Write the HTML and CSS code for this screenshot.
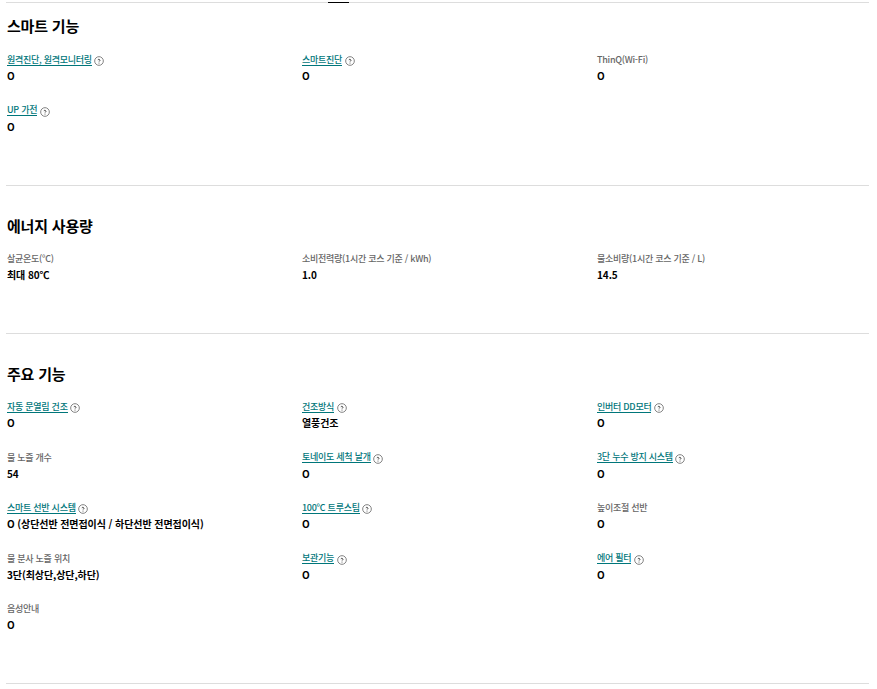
FILE: index.html
```html
<!DOCTYPE html>
<html lang="ko">
<head>
<meta charset="utf-8">
<title>제품 사양</title>
<link rel="stylesheet" href="styles.css">
</head>
<body>
<svg class="sprite" width="0" height="0" aria-hidden="true">
  <symbol id="help" viewBox="0 0 12 12">
    <circle cx="6" cy="6" r="5.2" fill="none" stroke="#777" stroke-width="1.1"/>
    <path d="M4.9 5a1.1 1.1 0 1 1 1.7 1c-.4.3-.6.4-.6.9" fill="none" stroke="#333" stroke-width="1"/>
    <circle cx="6" cy="8.5" r=".6" fill="#333"/>
  </symbol>
</svg>
<main class="page">
  <div class="indicator"></div>
  <section class="spec spec-smart">
    <h2>스마트 기능</h2>
    <dl class="grid">
      <div class="item"><dt><a href="#">원격진단, 원격모니터링</a><svg class="help"><use href="#help"/></svg></dt><dd>O</dd></div>
      <div class="item"><dt><a href="#">스마트진단</a><svg class="help"><use href="#help"/></svg></dt><dd>O</dd></div>
      <div class="item"><dt>ThinQ(Wi-Fi)</dt><dd>O</dd></div>
      <div class="item"><dt><a href="#">UP 가전</a><svg class="help"><use href="#help"/></svg></dt><dd>O</dd></div>
    </dl>
  </section>
  <section class="spec spec-energy">
    <h2>에너지 사용량</h2>
    <dl class="grid">
      <div class="item"><dt>살균온도(℃)</dt><dd>최대 80℃</dd></div>
      <div class="item"><dt>소비전력량(1시간 코스 기준 / kWh)</dt><dd>1.0</dd></div>
      <div class="item"><dt>물소비량(1시간 코스 기준 / L)</dt><dd>14.5</dd></div>
    </dl>
  </section>
  <section class="spec spec-main">
    <h2>주요 기능</h2>
    <dl class="grid">
      <div class="item"><dt><a href="#">자동 문열림 건조</a><svg class="help"><use href="#help"/></svg></dt><dd>O</dd></div>
      <div class="item"><dt><a href="#">건조방식</a><svg class="help"><use href="#help"/></svg></dt><dd>열풍건조</dd></div>
      <div class="item"><dt><a href="#">인버터 DD모터</a><svg class="help"><use href="#help"/></svg></dt><dd>O</dd></div>
      <div class="item"><dt>물 노즐 개수</dt><dd>54</dd></div>
      <div class="item"><dt><a href="#">토네이도 세척 날개</a><svg class="help"><use href="#help"/></svg></dt><dd>O</dd></div>
      <div class="item"><dt><a href="#">3단 누수 방지 시스템</a><svg class="help"><use href="#help"/></svg></dt><dd>O</dd></div>
      <div class="item"><dt><a href="#">스마트 선반 시스템</a><svg class="help"><use href="#help"/></svg></dt><dd>O (상단선반 전면접이식 / 하단선반 전면접이식)</dd></div>
      <div class="item"><dt><a href="#">100℃ 트루스팀</a><svg class="help"><use href="#help"/></svg></dt><dd>O</dd></div>
      <div class="item"><dt>높이조절 선반</dt><dd>O</dd></div>
      <div class="item"><dt>물 분사 노즐 위치</dt><dd>3단(최상단,상단,하단)</dd></div>
      <div class="item"><dt><a href="#">보관기능</a><svg class="help"><use href="#help"/></svg></dt><dd>O</dd></div>
      <div class="item"><dt><a href="#">에어 필터</a><svg class="help"><use href="#help"/></svg></dt><dd>O</dd></div>
      <div class="item"><dt>음성안내</dt><dd>O</dd></div>
    </dl>
  </section>
</main>
</body>
</html>
```
FILE: styles.css
```css
* { box-sizing: border-box; }
html, body { margin: 0; padding: 0; background: #fff; }
body {
  font-family: "Noto Sans CJK KR", "Noto Sans", sans-serif;
  color: #000;
  overflow: hidden;
}
.sprite { position: absolute; }
.page {
  position: relative;
  margin: 2px 8px 0 6px;
  border-top: 1px solid #ddd;
}
.indicator {
  position: absolute;
  top: -1px;
  left: 322px;
  width: 21px;
  height: 1px;
  background: #000;
}
.spec { padding-left: 1px; border-bottom: 1px solid #ddd; }
.spec-smart { height: 183px; padding-top: 12px; }
.spec-energy { height: 148px; padding-top: 29px; }
.spec-main { height: 350px; padding-top: 29px; }
h2 {
  margin: 0;
  font-size: 15px;
  line-height: 22px;
  font-weight: 700;
  letter-spacing: -0.2px;
}
.grid {
  margin: 0;
  padding-top: 14px;
  display: grid;
  grid-template-columns: repeat(3, 295px);
  grid-auto-rows: 50.5px;
}
.spec-smart .grid { padding-top: 15px; }
dt {
  display: flex;
  align-items: center;
  gap: 2.5px;
  height: 16px;
  font-size: 9px;
  font-weight: 500;
  line-height: 16px;
  letter-spacing: -0.26px;
  color: #666;
}
dt a {
  color: #00767a;
  text-decoration: none;
  line-height: 10px;
  border-bottom: 1px solid #00767a;
}
.help { width: 10px; height: 10px; margin-top: 2px; flex: none; }
dd {
  margin: 0;
  font-size: 10px;
  line-height: 15.5px;
  font-weight: 700;
  letter-spacing: -0.08px;
  color: #000;
}
```
